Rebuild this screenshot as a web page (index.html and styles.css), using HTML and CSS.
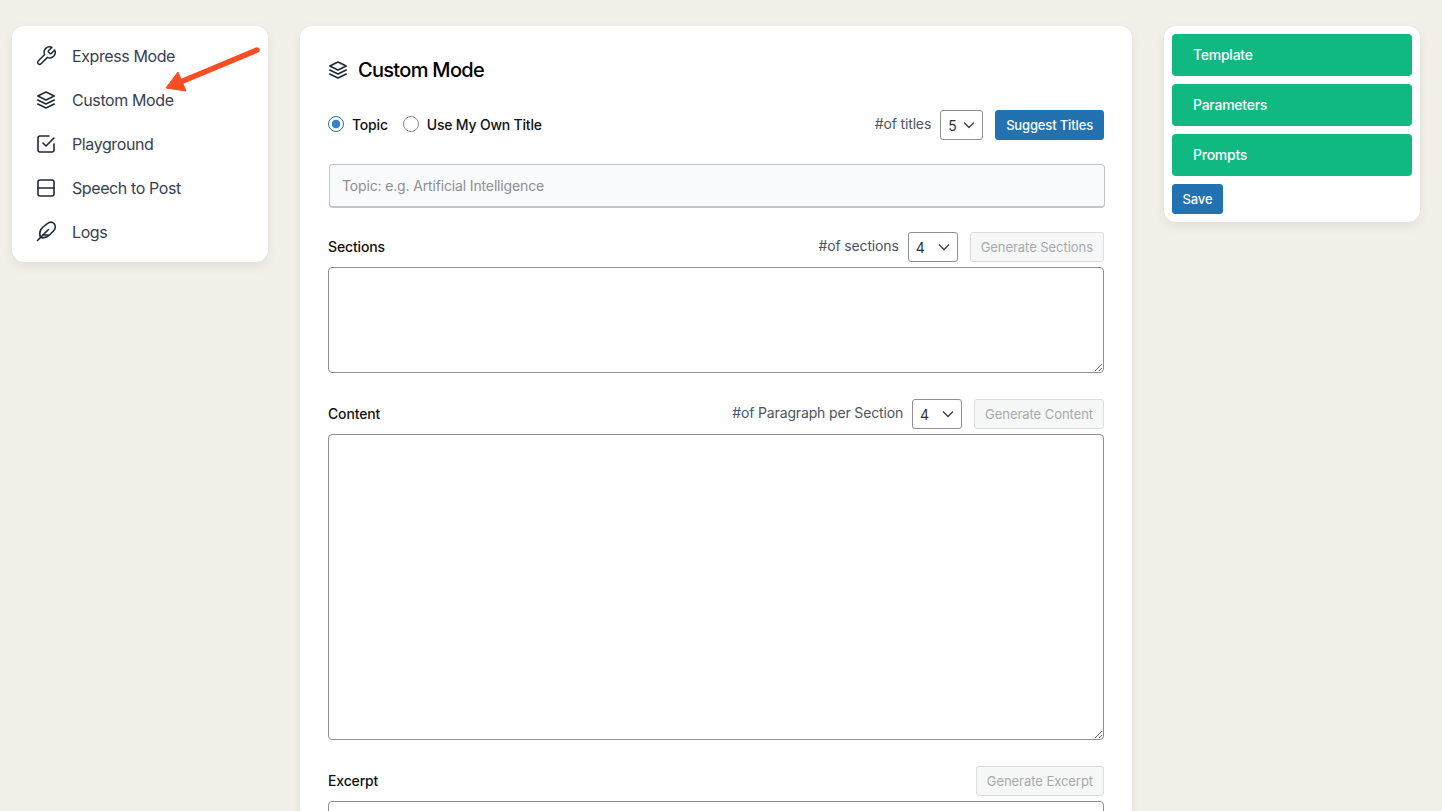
FILE: index.html
```html
<!DOCTYPE html>
<html lang="en">
<head>
    <meta charset="UTF-8">
    <meta name="viewport" content="width=device-width, initial-scale=1.0">
    <title>Custom Mode</title>
    <link rel="stylesheet" href="styles.css">
</head>
<body>
    <div class="page">
        <nav class="card side-menu">
            <a class="menu-item" href="#">
                <svg class="icon" viewBox="-1 -1 26 26"><path d="M14.7 6.3a1 1 0 0 0 0 1.4l1.6 1.6a1 1 0 0 0 1.4 0l3.77-3.77a6 6 0 0 1-7.94 7.94l-6.91 6.91a2.12 2.12 0 0 1-3-3l6.91-6.91a6 6 0 0 1 7.94-7.94l-3.76 3.76z"/></svg>
                Express Mode
            </a>
            <a class="menu-item" href="#">
                <svg class="icon" viewBox="0 0 24 24"><path d="M12 4l-8.200 4l8.200 4l8.200 -4z"/><path d="M3.800 12l8.200 4l8.200 -4"/><path d="M3.800 16l8.200 4l8.200 -4"/></svg>
                Custom Mode
            </a>
            <a class="menu-item" href="#">
                <svg class="icon" viewBox="0 0 24 24"><path d="M9 11l3 3l8 -8"/><path d="M20 12v6a2 2 0 0 1 -2 2h-12a2 2 0 0 1 -2 -2v-12a2 2 0 0 1 2 -2h9"/></svg>
                Playground
            </a>
            <a class="menu-item" href="#">
                <svg class="icon" viewBox="0 0 24 24"><path d="M4 6a2 2 0 0 1 2 -2h12a2 2 0 0 1 2 2v12a2 2 0 0 1 -2 2h-12a2 2 0 0 1 -2 -2z"/><path d="M4 12l16 0"/></svg>
                Speech to Post
            </a>
            <a class="menu-item" href="#">
                <svg class="icon" viewBox="0 0 24 24"><path d="M6.500 17.500C5 13 6 9.500 9 7L13 3.800C15.500 2 18.500 2 20 3.500C22 5.500 21.500 9 19.500 11L16 14.500C13 17.500 10 18.500 6.500 17.500Z"/><path d="M3.500 20.500L14.500 9.500"/><path d="M9 15h5"/></svg>
                Logs
            </a>
        </nav>

        <main class="card editor">
            <h1 class="editor-title">
                <svg class="icon title-icon" viewBox="0 0 24 24"><path d="M12 4l-8.200 4l8.200 4l8.200 -4z"/><path d="M3.800 12l8.200 4l8.200 -4"/><path d="M3.800 16l8.200 4l8.200 -4"/></svg>
                Custom Mode
            </h1>

            <div class="row topic-row">
                <div class="radios">
                    <label class="radio"><input type="radio" name="source" checked> Topic</label>
                    <label class="radio"><input type="radio" name="source"> Use My Own Title</label>
                </div>
                <div class="controls">
                    <span class="hint">#of titles</span>
                    <select class="count"><option>5</option></select>
                    <button class="btn btn-primary">Suggest Titles</button>
                </div>
            </div>

            <input class="topic-input" type="text" placeholder="Topic: e.g. Artificial Intelligence">

            <div class="row">
                <label class="field-label">Sections</label>
                <div class="controls">
                    <span class="hint">#of sections</span>
                    <select class="count wide"><option>4</option></select>
                    <button class="btn" disabled>Generate Sections</button>
                </div>
            </div>
            <textarea class="box sections-box"></textarea>

            <div class="row">
                <label class="field-label">Content</label>
                <div class="controls">
                    <span class="hint">#of Paragraph per Section</span>
                    <select class="count wide"><option>4</option></select>
                    <button class="btn" disabled>Generate Content</button>
                </div>
            </div>
            <textarea class="box content-box"></textarea>

            <div class="row">
                <label class="field-label">Excerpt</label>
                <div class="controls">
                    <button class="btn" disabled>Generate Excerpt</button>
                </div>
            </div>
            <textarea class="box excerpt-box"></textarea>
        </main>

        <aside class="card settings">
            <button class="panel-btn">Template</button>
            <button class="panel-btn">Parameters</button>
            <button class="panel-btn">Prompts</button>
            <div><button class="btn btn-primary btn-save">Save</button></div>
        </aside>
    </div>

    <!-- annotation drawn over the menu -->
    <svg class="arrow" width="270" height="100" viewBox="0 0 270 100">
        <path d="M257 50L178 83" stroke="#f94d23" stroke-width="5.500" stroke-linecap="round" fill="none"/>
        <path d="M166 88L178 72L186 91Z" fill="#f94d23" stroke="#f94d23" stroke-linejoin="round"/>
    </svg>
</body>
</html>
```

FILE: styles.css
```css
html, body {
    height: 100%;
    overflow: hidden;
}

body {
    margin: 0;
    background-color: #f3f0e9;
    font-family: Inter, "Liberation Sans", sans-serif;
    font-size: 14px;
    letter-spacing: -0.15px;
    color: #374151;
}

.page {
    display: flex;
    align-items: flex-start;
    gap: 32px;
    padding: 26px 22px 0 12px;
}

.card {
    box-sizing: border-box;
    background-color: #fff;
    border-radius: 12px;
    box-shadow: 0 4px 12px rgba(0, 0, 0, 0.08);
}

.icon {
    width: 24px;
    height: 24px;
    flex: none;
    fill: none;
    stroke: #1f2937;
    stroke-width: 1.6;
    stroke-linecap: round;
    stroke-linejoin: round;
}

/* left menu */
.side-menu {
    width: 256px;
    padding: 8px 22px;
}

.menu-item {
    display: flex;
    align-items: center;
    gap: 14px;
    height: 44px;
    font-size: 16px;
    letter-spacing: -0.4px;
    color: #374151;
    text-decoration: none;
}

/* middle form */
.editor {
    width: 832px;
    padding: 28px;
    flex: none;
}

.editor-title {
    display: flex;
    align-items: center;
    gap: 8px;
    height: 32px;
    margin: 0 0 24px;
    font-size: 20px;
    font-weight: 500;
    letter-spacing: -0.7px;
    color: #000;
}

.title-icon {
    margin-left: -2px;
}

.row {
    display: flex;
    align-items: center;
    justify-content: space-between;
    height: 30px;
    margin-bottom: 5px;
}

.topic-row {
    margin-bottom: 24px;
}

.radios {
    display: flex;
    gap: 15px;
    padding-bottom: 2px;
}

.radio {
    display: flex;
    align-items: center;
    gap: 8px;
    font-weight: 500;
    letter-spacing: -0.2px;
    color: #111;
}

.radio input {
    appearance: none;
    box-sizing: border-box;
    width: 16px;
    height: 16px;
    margin: 0;
    border: 1px solid #8c8f94;
    border-radius: 50%;
    background-color: #fff;
}

.radio input:checked {
    border-color: #2271b1;
    background: radial-gradient(circle, #3582c4 0 4px, #fff 4.6px);
}

.controls {
    display: flex;
    align-items: center;
    gap: 9px;
}

.hint {
    line-height: 22px;
    margin-top: -3px;
    color: #4b5563;
}

.field-label {
    padding-bottom: 2px;
    font-weight: 500;
    color: #111;
}

.count {
    appearance: none;
    box-sizing: border-box;
    width: 43px;
    height: 30px;
    padding: 0 0 0 7px;
    border: 1px solid #8c8f94;
    border-radius: 3px;
    background: #fff url("data:image/svg+xml,%3Csvg xmlns='http://www.w3.org/2000/svg' width='12' height='8'%3E%3Cpath d='M1 1.500l5 5 5-5' fill='none' stroke='%23444' stroke-width='1.500'/%3E%3C/svg%3E") no-repeat right 7px center;
    font: inherit;
    color: #2c3338;
}

.count.wide {
    width: 50px;
}

.btn {
    box-sizing: border-box;
    height: 30px;
    margin-left: 3px;
    padding: 0 10px;
    border: 1px solid #dcdcde;
    border-radius: 3px;
    background-color: #f6f7f7;
    font-family: inherit;
    font-size: 13px;
    font-weight: 400;
    letter-spacing: -0.05px;
    color: #a7aaad;
}

.btn-primary {
    border-color: #2271b1;
    background-color: #2271b1;
    font-weight: 500;
    letter-spacing: -0.15px;
    color: #fff;
}

.topic-input {
    display: block;
    box-sizing: border-box;
    width: 776px;
    height: 44px;
    margin: 0 0 24px 1px;
    padding: 0 12px;
    border: 1px solid #c3c4c7;
    border-bottom-width: 2px;
    border-radius: 4px;
    background-color: #f9fafb;
    font-family: inherit;
    font-size: 14px;
    letter-spacing: -0.15px;
}

.topic-input::placeholder {
    color: #8c8f94;
}

.box {
    display: block;
    box-sizing: border-box;
    width: 776px;
    margin: 0 0 26px;
    border: 1px solid #8c8f94;
    border-radius: 4px;
    background-color: #fff;
}

.sections-box {
    height: 106px;
}

.content-box {
    height: 306px;
}

.excerpt-box {
    height: 106px;
}

/* right panel */
.settings {
    display: flex;
    flex-direction: column;
    gap: 8px;
    width: 256px;
    flex: none;
    padding: 8px;
}

.panel-btn {
    height: 42px;
    padding: 0 21px 2px;
    border: 0;
    border-radius: 4px;
    background-color: #10b981;
    font-family: inherit;
    font-size: 14px;
    font-weight: 500;
    letter-spacing: -0.25px;
    color: #fff;
    text-align: left;
}

.settings .btn-save {
    display: block;
    margin: 0;
    width: 51px;
    padding: 0;
}

.arrow {
    position: absolute;
    top: 0;
    left: 0;
    pointer-events: none;
}
```
